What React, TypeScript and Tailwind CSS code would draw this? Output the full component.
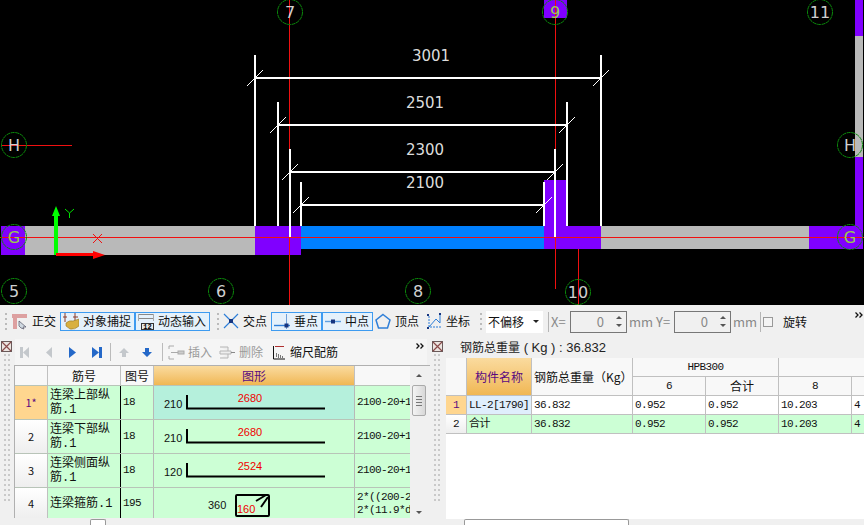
const sans = "font-['Noto_Sans_CJK_SC','Liberation_Sans',sans-serif]"
const mono = "font-['Liberation_Mono','Noto_Sans_CJK_SC',monospace] text-[11px] tracking-[-0.6px]"

function Grip({ className = '' }: { className?: string }) {
    return (
        <div className={`grid grid-cols-2 gap-x-[2px] gap-y-[3px] content-start ${className}`}>
            {Array.from({ length: 60 }).map((_, i) => (
                <div key={i} className="w-[2px] h-[2px] bg-[#c9c9c9]" />
            ))}
        </div>
    )
}

function PanelIcon() {
    return (
        <svg width="11" height="11" viewBox="0 0 11 11" className="shrink-0">
            <rect x="0.5" y="0.5" width="10" height="10" fill="#ece4e0" stroke="#6a5a5a" />
            <path d="M1 1 L10 10 M10 1 L1 10" stroke="#8a4a4a" strokeWidth="1.2" />
        </svg>
    )
}

function Chevrons() {
    return (
        <svg width="8" height="6" viewBox="0 0 8 6" className="shrink-0">
            <path d="M0.5 0.5 L3 3 L0.5 5.5 M4.5 0.5 L7 3 L4.5 5.5" stroke="#111" strokeWidth="1.3" fill="none" />
        </svg>
    )
}

function Marker({ x, y, label, color = '#d0d0d0' }: { x: number; y: number; label: string; color?: string }) {
    return (
        <g>
            <circle cx={x} cy={y} r="12.5" fill="none" stroke="#0b8a0b" strokeDasharray="4 0.6" />
            <text x={x} y={y + 6} textAnchor="middle" fontSize="16" fill={color} fontFamily="DejaVu Sans">
                {label}
            </text>
        </g>
    )
}

function Dim({ x1, x2, y, top, bottom, label, lx, ly }: { x1: number; x2: number; y: number; top: number; bottom: number; label: string; lx: number; ly: number }) {
    return (
        <g stroke="#fff">
            <line x1={x1} x2={x2} y1={y} y2={y} strokeWidth="2" />
            <line x1={x1} x2={x1} y1={top} y2={bottom} strokeWidth="2" />
            <line x1={x2} x2={x2} y1={top} y2={bottom} strokeWidth="2" />
            <line x1={x1 - 8} y1={y + 8} x2={x1 + 8} y2={y - 8} />
            <line x1={x2 - 8} y1={y + 8} x2={x2 + 8} y2={y - 8} />
            <text x={lx} y={ly} textAnchor="middle" fontSize="15" stroke="none" fill="#dcdcdc" fontFamily="DejaVu Sans">
                {label}
            </text>
        </g>
    )
}

function Canvas() {
    return (
        <div className="h-[305px] bg-black">
            <svg width="864" height="305" viewBox="0 0 864 305" className="block">
                <rect x="1" y="226" width="24" height="29" fill="#8000ff" />
                <rect x="25" y="226" width="230" height="29" fill="#b9b9b9" />
                <rect x="255" y="226" width="46" height="29" fill="#8000ff" />
                <rect x="301" y="226" width="243" height="23" fill="#0080ff" />
                <rect x="544" y="226" width="57" height="23" fill="#8000ff" />
                <rect x="544" y="180" width="22" height="46" fill="#8000ff" />
                <rect x="544" y="0" width="23" height="18" fill="#8000ff" />
                <rect x="601" y="226" width="208" height="23" fill="#b9b9b9" />
                <rect x="809" y="226" width="54" height="23" fill="#8000ff" />
                <rect x="855" y="0" width="8" height="36" fill="#8000ff" />
                <rect x="855" y="36" width="8" height="121" fill="#b9b9b9" />
                <rect x="855" y="157" width="8" height="69" fill="#8000ff" />

                <g stroke="#f01010" shapeRendering="crispEdges">
                    <line x1="0" x2="864" y1="237.5" y2="237.5" />
                    <line x1="289.5" x2="289.5" y1="0" y2="305" />
                    <line x1="555.5" x2="555.5" y1="0" y2="289" />
                    <line x1="578.5" x2="578.5" y1="249" y2="305" />
                    <line x1="1" x2="72" y1="145.5" y2="145.5" />
                </g>
                <path d="M93 234 L102 243 M102 234 L93 243" fill="none" stroke="#f01010" />

                <Dim x1={255} x2={601} y={78} top={55} bottom={226} label="3001" lx={431} ly={61} />
                <Dim x1={278} x2={567} y={125} top={102} bottom={226} label="2501" lx={425} ly={108} />
                <Dim x1={290} x2={555} y={172} top={149} bottom={237} label="2300" lx={425} ly={155} />
                <Dim x1={301} x2={544} y={205} top={182} bottom={226} label="2100" lx={425} ly={188} />

                <rect x="54" y="213" width="4" height="42" fill="#00ff00" />
                <path d="M56 206 L60 216 L52 216 Z" fill="#00ff00" />
                <rect x="56" y="253" width="38" height="3" fill="#ff0000" />
                <path d="M93 251 L105 255 L93 259 Z" fill="#ff0000" />
                <path d="M65 209 L69.5 213 L74 209 M69.5 213 L69.5 218" stroke="#00e000" fill="none" />

                <Marker x={14} y={145} label="H" />
                <Marker x={14} y={237} label="G" color="#9acb4c" />
                <Marker x={14} y={291} label="5" />
                <Marker x={221} y={291} label="6" />
                <Marker x={290} y={12} label="7" />
                <Marker x={418} y={291} label="8" />
                <Marker x={555} y={12} label="9" color="#9acb4c" />
                <Marker x={578} y={292} label="10" />
                <Marker x={820} y={12} label="11" />
                <Marker x={850} y={145} label="H" />
                <Marker x={850} y={237} label="G" color="#9acb4c" />
            </svg>
        </div>
    )
}

const icons: Record<string, React.ReactNode> = {
    ortho: (
        <>
            <path d="M0 1 H15 V5 H5 V16 H1 V5 H0 Z" fill="#dda0a0" />
            <path d="M7 8 L14 14 L11 14 L12 16 L9 15 L7 13 Z" fill="#cfd8e0" stroke="#556" strokeWidth="0.7" />
        </>
    ),
    snap: (
        <>
            <path d="M2 0 V9 M12 0 V9 M0 4 H4 M10 4 H15" stroke="#8a3a2a" fill="none" />
            <path d="M3 10 Q6 7 10 8 L16 6 L16 13 Q12 17 7 16 L3 13 Z" fill="#d8b040" stroke="#97782a" strokeWidth="0.6" />
        </>
    ),
    input: (
        <>
            <path d="M0 1.5 H16 M0 5.5 H16" stroke="#888" />
            <path d="M0.5 1 V8 M15.5 1 V8" stroke="#aaa" />
            <rect x="3.5" y="10.5" width="12" height="6" fill="#e8e8e8" stroke="#333" />
            <text x="9.5" y="16" textAnchor="middle" fontSize="7" fontFamily="Liberation Mono" fontWeight="700" fill="#000">12</text>
        </>
    ),
    cross: (
        <>
            <path d="M1 1 L15 15 M15 1 L1 15" stroke="#2f7fd8" strokeWidth="1.2" />
            <rect x="6" y="6" width="4" height="4" fill="#16357f" />
        </>
    ),
    perp: (
        <>
            <path d="M0 12.5 H16" stroke="#2f7fd8" strokeWidth="1.4" />
            <path d="M12.5 1 V16" stroke="#6f9fd8" />
            <rect x="10.5" y="10.5" width="4" height="4" fill="#16357f" />
        </>
    ),
    mid: (
        <>
            <path d="M0 8.5 H16" stroke="#5f9fe0" strokeWidth="1.4" />
            <rect x="6" y="6.5" width="4" height="4" fill="#16357f" />
        </>
    ),
    vertex: <path d="M8 1.5 L15 7 L12.5 15 H3.5 L1 7 Z" fill="none" stroke="#2f7fd8" strokeWidth="1.5" />,
    coord: (
        <>
            <path d="M3 3 V14 H15" stroke="#2f7fd8" strokeDasharray="2 1" fill="none" />
            <path d="M3 14 L10 6 L14 10 V1" stroke="#2f7fd8" fill="none" />
            <rect x="1" y="1" width="2" height="2" fill="#16357f" />
            <rect x="13" y="0" width="2" height="2" fill="#16357f" />
            <rect x="1" y="14" width="2" height="2" fill="#16357f" />
        </>
    ),
}

function ToolIcon({ name }: { name: string }) {
    return (
        <svg width="16" height="17" viewBox="0 0 16 17" className="shrink-0">
            {icons[name]}
        </svg>
    )
}

function Tool({ icon, label, active, width }: { icon: string; label: string; active?: boolean; width: string }) {
    return (
        <div className={`h-[19px] flex items-center gap-[4px] pl-[2px] shrink-0 ${width} ${active ? 'border border-[#3e9bf0] bg-[#e5f1fb]' : ''}`}>
            <ToolIcon name={icon} />
            <span className="text-[12px] leading-none whitespace-nowrap text-[#111] -mt-[2px]">{label}</span>
        </div>
    )
}

function Spin() {
    return (
        <div className="w-[57px] h-[22px] shrink-0 border border-[#777] bg-[#f0f0f0] flex items-center justify-end text-[13px] text-[#888]">
            <span className="mr-[8px]">0</span>
            <div className="w-[14px] flex flex-col items-center gap-[5px]">
                <div className="w-0 h-0 border-x-[3px] border-x-transparent border-b-[3px] border-b-[#555]" />
                <div className="w-0 h-0 border-x-[3px] border-x-transparent border-t-[3px] border-t-[#555]" />
            </div>
        </div>
    )
}

function BarGrip({ className }: { className: string }) {
    return (
        <div className={`flex flex-col gap-[3px] shrink-0 ${className}`}>
            {[0, 1, 2, 3].map((i) => <div key={i} className="w-[2px] h-[2px] bg-[#bbb]" />)}
        </div>
    )
}

function Toolbar() {
    return (
        <div className="h-[33px] bg-[#f0f0f0] flex items-center pl-[5px] text-[#111]">
            <BarGrip className="w-[5px]" />
            <Tool icon="ortho" label="正交" width="w-[50px]" />
            <Tool icon="snap" label="对象捕捉" active width="w-[75px]" />
            <Tool icon="input" label="动态输入" active width="w-[75px]" />
            <BarGrip className="w-[4px] ml-[7px]" />
            <Tool icon="cross" label="交点" width="w-[50px]" />
            <Tool icon="perp" label="垂点" active width="w-[51px]" />
            <Tool icon="mid" label="中点" active width="w-[51px]" />
            <Tool icon="vertex" label="顶点" width="w-[51px]" />
            <Tool icon="coord" label="坐标" width="w-[50px]" />
            <BarGrip className="w-[6px] ml-[6px]" />
            <div className="w-[57px] h-[22px] shrink-0 bg-white flex items-center justify-between pl-[2px] pr-[4px] text-[12px]">
                <span>不偏移</span>
                <div className="w-0 h-0 border-x-[3px] border-x-transparent border-t-[3px] border-t-[#222]" />
            </div>
            <div className="w-px h-[20px] bg-[#b5b5b5] ml-[5px] shrink-0" />
            <span className="w-[21px] pl-[2px] text-[13px] text-[#888] shrink-0">X=</span>
            <Spin />
            <span className="w-[29px] pl-[2px] text-[13px] text-[#888] shrink-0">mm</span>
            <span className="w-[18px] text-[13px] text-[#888] shrink-0">Y=</span>
            <Spin />
            <span className="w-[29px] pl-[2px] text-[13px] text-[#888] shrink-0">mm</span>
            <div className="w-px h-[20px] bg-[#b5b5b5] shrink-0" />
            <div className="w-[10px] h-[10px] border border-[#999] bg-[#f4f4f4] ml-[2px] shrink-0" />
            <span className="text-[12px] ml-[10px] shrink-0">旋转</span>
            <div className="ml-auto mr-[1px] mb-[14px]"><Chevrons /></div>
        </div>
    )
}

function NavIcon({ kind, on }: { kind: string; on?: boolean }) {
    const c = on ? '#2468c8' : '#c4c8cc'
    return (
        <svg width="12" height="13" viewBox="0 0 12 13" className="shrink-0">
            {kind === 'first' && <><rect x="1" y="1" width="3" height="11" fill={c} /><path d="M10 1 L4 6.5 L10 12 Z" fill={c} /></>}
            {kind === 'prev' && <path d="M9 1 L3 6.5 L9 12 Z" fill={c} />}
            {kind === 'next' && <path d="M3 1 L10 6.5 L3 12 Z" fill={c} />}
            {kind === 'last' && <><path d="M1 1 L8 6.5 L1 12 Z" fill={c} /><rect x="8" y="1" width="3" height="11" fill={c} /></>}
            {kind === 'up' && <path d="M6 2 L11 7 H8 V11 H4 V7 H1 Z" fill={c} />}
            {kind === 'down' && <path d="M4 2 H8 V6 H11 L6 11 L1 6 H4 Z" fill={c} />}
        </svg>
    )
}

function GridToolbar() {
    return (
        <div className="h-[27px] mt-px ml-[2px] mr-[3px] bg-[#f5f5f5] flex items-center pl-[4px] text-[12px]">
            <NavIcon kind="first" />
            <div className="w-[12px]" />
            <NavIcon kind="prev" />
            <div className="w-[11px]" />
            <NavIcon kind="next" on />
            <div className="w-[13px]" />
            <NavIcon kind="last" on />
            <div className="w-px h-[18px] bg-[#bbb] ml-[7px]" />
            <div className="w-[7px]" />
            <NavIcon kind="up" />
            <div className="w-[11px]" />
            <NavIcon kind="down" on />
            <div className="w-px h-[18px] bg-[#bbb] ml-[9px] mr-[5px]" />
            <svg width="17" height="15" viewBox="0 0 17 15" className="shrink-0">
                <path d="M6 1 H1 V4 M6 14 H1 V11 M3 7.5 H11" stroke="#aaa" fill="none" />
                <rect x="10" y="6" width="6" height="3" fill="#ccc" stroke="#aaa" />
            </svg>
            <span className="ml-[3px] text-[#9a9a9a] w-[31px]">插入</span>
            <svg width="17" height="15" viewBox="0 0 17 15" className="shrink-0">
                <path d="M1 2 H9 V6 M1 13 H9 V9 M1 6 H12 V9 H1 Z" stroke="#b5b5b5" fill="#eee" />
                <path d="M12 7.5 H16" stroke="#888" />
            </svg>
            <span className="ml-[3px] text-[#9a9a9a] w-[33px]">删除</span>
            <svg width="14" height="15" viewBox="0 0 14 15" className="shrink-0">
                <path d="M1.5 1 V14 H13" stroke="#111" fill="none" />
                <path d="M3 1.5 H12" stroke="#b03030" />
                <path d="M4.5 12 V8 M6.5 13 V9 M8.5 13 V10 M10.5 13 V11" stroke="#777" />
            </svg>
            <span className="ml-[4px] text-[#111] w-[126px]">缩尺配筋</span>
            <div className="mb-[12px]"><Chevrons /></div>
        </div>
    )
}

function Bar({ value, label }: { value: string; label: string }) {
    return (
        <svg width="200" height="33" viewBox="0 0 200 33" className="block">
            <text x="10" y="22" fontSize="11" fontFamily="Liberation Sans" fill="#111">{value}</text>
            <path d="M33 9 V22.5 H171" stroke="#000" strokeWidth="2" fill="none" />
            <text x="96" y="16" textAnchor="middle" fontSize="11" fontFamily="Liberation Sans" fill="#f00000">{label}</text>
        </svg>
    )
}

function Stirrup() {
    return (
        <svg width="200" height="31" viewBox="0 0 200 31" className="block">
            <text x="54" y="21" fontSize="11" fontFamily="Liberation Sans" fill="#111">360</text>
            <rect x="82" y="7" width="33" height="21" rx="1" fill="none" stroke="#000" strokeWidth="2" />
            <path d="M102 13 L112 7 M107 19 L114 9" stroke="#000" strokeWidth="2" fill="none" />
            <text x="83" y="25" fontSize="11" fontFamily="Liberation Sans" fill="#f00000">160</text>
        </svg>
    )
}

const leftCols = 'grid grid-cols-[33px_73px_33px_201px_55px]'
const rows = [
    { no: '1*', name: '连梁上部纵筋.1', fig: '18', shape: <Bar value="210" label="2680" />, calc: ['2100-20+1'], h: 'h-[34px]' },
    { no: '2', name: '连梁下部纵筋.1', fig: '18', shape: <Bar value="210" label="2680" />, calc: ['2100-20+1'], h: 'h-[34px]' },
    { no: '3', name: '连梁侧面纵筋.1', fig: '18', shape: <Bar value="120" label="2524" />, calc: ['2100-20+1'], h: 'h-[34px]' },
    { no: '4', name: '连梁箍筋.1', fig: '195', shape: <Stirrup />, calc: ['2*((200-2', '2*(11.9*d'], h: 'h-[31px]' },
]

function LeftTable() {
    return (
        <div className="ml-px border-t border-l border-[#b0b0b0] flex">
            <div className="w-[395px] overflow-hidden">
                <div className={`${leftCols} h-[19px] text-[12px] text-center leading-[19px] text-[#111]`}>
                    <div className="bg-[#f8f8f8] border-r border-[#c0c0c0]" />
                    <div className="bg-[#f8f8f8] border-r border-[#c0c0c0]">筋号</div>
                    <div className="bg-[#f8f8f8] border-r border-[#c0c0c0]">图号</div>
                    <div className="bg-gradient-to-b from-[#fadb9e] to-[#f0b752] text-[#5a0a80] border-r border-[#c0c0c0]">图形</div>
                    <div className="bg-[#f8f8f8]" />
                </div>
                {rows.map((r, i) => (
                    <div key={r.no} className={`${leftCols} ${r.h} border-t border-[#b8c4b8] bg-[#ccffd5] text-[#111] overflow-hidden`}>
                        <div className={`flex items-center justify-center text-[11px] border-r border-[#c0c0c0] ${i === 0 ? 'bg-[#ffd68f] text-[#5a0a80]' : 'bg-gradient-to-b from-white to-[#eeeeee]'}`}>{r.no}</div>
                        <div className="flex items-center pl-[2px] font-['Liberation_Mono','Noto_Sans_CJK_SC',monospace] text-[12px] leading-[14px] border-r border-black">{r.name}</div>
                        <div className={`flex items-center pl-[2px] border-r border-[#b8b8b8] ${mono}`}>{r.fig}</div>
                        <div className={`border-r border-[#b8b8b8] ${i === 0 ? 'bg-[#b5f0dc]' : ''}`}>{r.shape}</div>
                        <div className={`flex flex-col justify-center pl-[2px] whitespace-nowrap overflow-hidden leading-[13px] ${mono}`}>
                            {r.calc.map((c) => <span key={c}>{c}</span>)}
                        </div>
                    </div>
                ))}
            </div>
            <div className="w-[17px] bg-[#f0f0f0] flex flex-col items-center">
                <div className="h-[19px] flex items-center">
                    <div className="w-0 h-0 border-x-[3px] border-x-transparent border-b-[3px] border-b-[#555]" />
                </div>
                <div className="w-[14px] h-[31px] bg-gradient-to-r from-[#f4f4f4] to-[#d8d8d8] border border-[#aaa] rounded-[2px] flex flex-col items-center justify-center gap-[2px]">
                    {[0, 1, 2, 3].map((i) => <div key={i} className="w-[6px] h-px bg-[#777]" />)}
                </div>
                <div className="mt-auto mb-[4px] w-0 h-0 border-x-[3px] border-x-transparent border-t-[3px] border-t-[#555]" />
            </div>
        </div>
    )
}

const rightCols = 'grid grid-cols-[21px_65px_101px_73px_73px_73px_13px]'
const dataRows = [
    { no: '1', name: 'LL-2[1790]', total: '36.832', a: '0.952', b: '0.952', c: '10.203', d: '4', bg: 'bg-white', nameBg: 'bg-[#dfeefc]', noBg: 'bg-[#ffd68f] text-[#5a0a80]' },
    { no: '2', name: '合计', total: '36.832', a: '0.952', b: '0.952', c: '10.203', d: '4', bg: 'bg-[#ccffd5]', nameBg: 'bg-[#ccffd5]', noBg: 'bg-gradient-to-b from-white to-[#eeeeee]' },
]

function RightTable() {
    const cell = 'border-r border-b border-[#c0c0c0]'
    return (
        <div className="w-[419px] bg-white flex-1 text-[#111] overflow-hidden">
            <div className="grid grid-cols-[21px_65px_101px_146px_86px] h-[38px] bg-[#f8f8f8]">
                <div className={cell} />
                <div className={`${cell} flex items-center justify-center bg-gradient-to-b from-[#fadb9e] to-[#f0b752] text-[12px] text-[#5a0a80]`}>构件名称</div>
                <div className={`${cell} flex items-center pl-[2px] text-[12px] whitespace-nowrap`}>钢筋总重量（Kg）</div>
                <div className="flex flex-col">
                    <div className={`${cell} h-[19px] flex items-center justify-center ${mono}`}>HPB300</div>
                    <div className="grid grid-cols-2 h-[19px]">
                        <div className={`${cell} flex items-center justify-center ${mono}`}>6</div>
                        <div className={`${cell} flex items-center justify-center text-[12px]`}>合计</div>
                    </div>
                </div>
                <div className="flex flex-col">
                    <div className={`${cell} h-[19px]`} />
                    <div className="grid grid-cols-[73px_13px] h-[19px]">
                        <div className={`${cell} flex items-center justify-center ${mono}`}>8</div>
                        <div className={cell} />
                    </div>
                </div>
            </div>
            {dataRows.map((r) => (
                <div key={r.no} className={`${rightCols} h-[19px] ${r.bg} ${mono}`}>
                    <div className={`${cell} flex items-center justify-center ${r.noBg}`}>{r.no}</div>
                    <div className={`${cell} ${r.nameBg} flex items-center pl-[2px] whitespace-nowrap`}>{r.name}</div>
                    <div className={`${cell} flex items-center pl-[2px]`}>{r.total}</div>
                    <div className={`${cell} flex items-center pl-[2px]`}>{r.a}</div>
                    <div className={`${cell} flex items-center pl-[2px]`}>{r.b}</div>
                    <div className={`${cell} flex items-center pl-[2px]`}>{r.c}</div>
                    <div className={`${cell} flex items-center pl-[2px]`}>{r.d}</div>
                </div>
            ))}
        </div>
    )
}

function HScroll({ thumb, width }: { thumb: string; width: string }) {
    return (
        <div className={`h-[6px] shrink-0 bg-[#f0f0f0] flex ${width}`}>
            <div className={`h-[6px] border-t border-x border-[#999] bg-white rounded-t-[2px] ${thumb}`} />
        </div>
    )
}

export default function App() {
    return (
        <div className={`w-[864px] h-[525px] overflow-hidden bg-[#f0f0f0] ${sans}`}>
            <Canvas />
            <Toolbar />
            <div className="flex h-[187px]">
                <div className="w-[430px] flex shrink-0">
                    <div className="w-[13px] pt-[3px] flex flex-col items-center gap-[2px] shrink-0 overflow-hidden">
                        <PanelIcon />
                        <Grip />
                    </div>
                    <div className="w-[417px] flex flex-col">
                        <GridToolbar />
                        <div className="h-[154px] overflow-hidden shrink-0"><LeftTable /></div>
                        <HScroll thumb="ml-[77px] w-[16px]" width="w-[414px]" />
                    </div>
                </div>
                <div className="flex-1 flex min-w-0">
                    <div className="w-[14px] pt-[3px] flex flex-col items-center gap-[2px] shrink-0 overflow-hidden">
                        <PanelIcon />
                        <Grip />
                    </div>
                    <div className="flex flex-col flex-1 pl-[2px] min-w-0">
                        <div className="h-[20px] pl-[14px] flex items-baseline text-[12px] text-[#222] whitespace-nowrap">
                            钢筋总重量<span className="text-[13px] font-['Liberation_Sans',sans-serif]">&nbsp;( Kg ) : 36.832</span>
                        </div>
                        <RightTable />
                        <HScroll thumb="ml-[18px] w-[165px]" width="w-[419px]" />
                    </div>
                </div>
            </div>
        </div>
    )
}
